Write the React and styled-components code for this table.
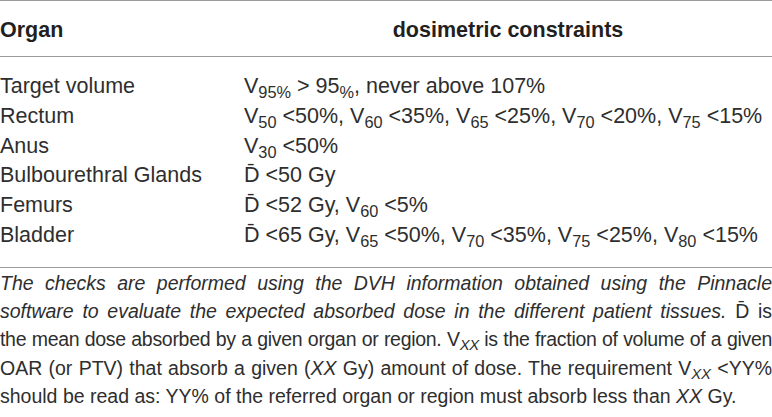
import React from 'react'
import styled, { createGlobalStyle } from 'styled-components'

const GlobalStyle = createGlobalStyle`
  html, body {
    margin: 0;
    padding: 0;
    background: #fff;
  }
  body {
    font-family: 'Liberation Sans', Arial, sans-serif;
    color: #2e2e2e;
  }
`

const Page = styled.div`
  width: 772px;
  height: 417px;
  overflow: hidden;
`

const Table = styled.div`
  border-top: 1px solid #9a9a9a;
  border-bottom: 1px solid #9a9a9a;
`

const Grid = styled.div`
  display: grid;
  grid-template-columns: 244px 1fr;
`

const HeadRow = styled(Grid)`
  height: 55px;
  align-items: center;
  border-bottom: 1px solid #9a9a9a;
  font-weight: bold;
  font-size: 21.5px;
  color: #231f20;
`

const HeadCell = styled.div`
  text-align: ${p => (p.$center ? 'center' : 'left')};
  line-height: 24px;
  padding-top: 2px;
`

const Body = styled.div`
  padding: 15px 0 16px;
  font-size: 21.5px;
`

const Row = styled(Grid)`
  height: 29.8px;
  align-items: center;
`

const Cell = styled.div`
  line-height: 29.8px;
  white-space: nowrap;
`

const Sub = styled.sub`
  font-size: 0.76em;
  line-height: 0;
  vertical-align: -0.3em;
  font-style: ${p => (p.$italic ? 'italic' : 'normal')};
`

const Note = styled.div`
  font-size: 19.5px;
  padding-top: 1px;
`

const NoteLine = styled.div`
  line-height: 28.3px;
  height: 28.3px;
  text-align: justify;
  text-align-last: ${p => (p.$last ? 'left' : 'justify')};
  letter-spacing: ${p => p.$tight || 0}px;
  white-space: nowrap;
  font-style: ${p => (p.$italic ? 'italic' : 'normal')};
`

const Up = styled.span`
  font-style: normal;
`

const I = styled.i`
  font-style: italic;
`

const Dbar = () => <span>D&#772;</span>

const V = ({ n, italic }) => (
  <>
    V<Sub $italic={italic}>{n}</Sub>
  </>
)

const rows = [
  {
    organ: 'Target volume',
    value: (
      <>
        <V n="95%" /> &gt; 95<Sub>%</Sub>, never above 107%
      </>
    ),
  },
  {
    organ: 'Rectum',
    value: (
      <>
        <V n="50" /> &lt;50%, <V n="60" /> &lt;35%, <V n="65" /> &lt;25%, <V n="70" /> &lt;20%,{' '}
        <V n="75" /> &lt;15%
      </>
    ),
  },
  {
    organ: 'Anus',
    value: (
      <>
        <V n="30" /> &lt;50%
      </>
    ),
  },
  {
    organ: 'Bulbourethral Glands',
    value: (
      <>
        <Dbar /> &lt;50 Gy
      </>
    ),
  },
  {
    organ: 'Femurs',
    value: (
      <>
        <Dbar /> &lt;52 Gy, <V n="60" /> &lt;5%
      </>
    ),
  },
  {
    organ: 'Bladder',
    value: (
      <>
        <Dbar /> &lt;65 Gy, <V n="65" /> &lt;50%, <V n="70" /> &lt;35%, <V n="75" /> &lt;25%,{' '}
        <V n="80" /> &lt;15%
      </>
    ),
  },
]

const App = () => (
  <Page>
    <GlobalStyle />
    <Table>
      <HeadRow>
        <HeadCell>Organ</HeadCell>
        <HeadCell $center>dosimetric constraints</HeadCell>
      </HeadRow>
      <Body>
        {rows.map(r => (
          <Row key={r.organ}>
            <Cell>{r.organ}</Cell>
            <Cell>{r.value}</Cell>
          </Row>
        ))}
      </Body>
    </Table>
    <Note>
      <NoteLine $italic>
        The checks are performed using the DVH information obtained using the Pinnacle
      </NoteLine>
      <NoteLine $italic>
        software to evaluate the expected absorbed dose in the different patient tissues.{' '}
        <Up>
          <Dbar /> is
        </Up>
      </NoteLine>
      <NoteLine $tight={-0.3}>
        the mean dose absorbed by a given organ or region. <V n="XX" italic /> is the fraction of
        volume of a given
      </NoteLine>
      <NoteLine>
        OAR (or PTV) that absorb a given (<I>XX</I> Gy) amount of dose. The requirement{' '}
        <V n="XX" italic /> &lt;YY%
      </NoteLine>
      <NoteLine $last>
        should be read as: YY% of the referred organ or region must absorb less than <I>XX</I> Gy.
      </NoteLine>
    </Note>
  </Page>
)

export default App
